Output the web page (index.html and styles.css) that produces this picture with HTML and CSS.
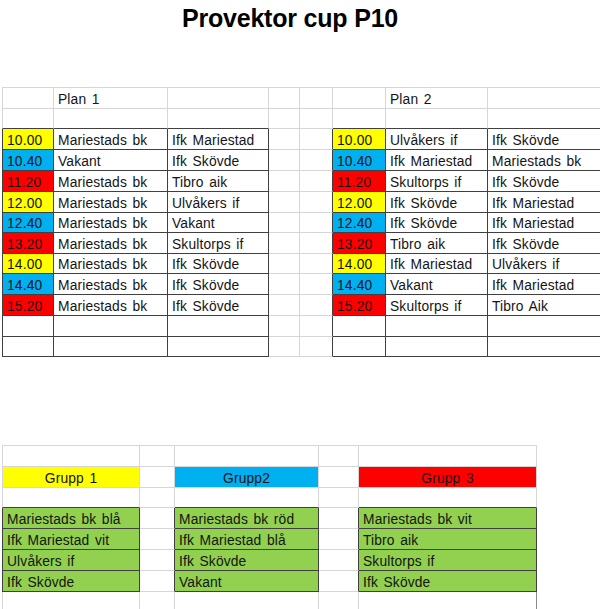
FILE: index.html
```html
<!DOCTYPE html>
<html>
<head>
<meta charset="utf-8">
<link rel="stylesheet" href="styles.css">
</head>
<body>
<h1 class="title">Provektor cup P10</h1>

<div class="sheet top-sheet">
  <!-- row 1 -->
  <div class="cell first top"></div><div class="cell top">Plan 1</div><div class="cell top"></div><div class="cell top"></div><div class="cell top"></div><div class="cell top"></div><div class="cell top">Plan 2</div><div class="cell top"></div>
  <!-- row 2 -->
  <div class="cell first dkb"></div><div class="cell dkb"></div><div class="cell dkb"></div><div class="cell"></div><div class="cell"></div><div class="cell dkb"></div><div class="cell dkb"></div><div class="cell dkb"></div>
  <!-- row 3 -->
  <div class="cell first dkl dk y">10.00</div><div class="cell dk">Mariestads bk</div><div class="cell dk">Ifk Mariestad</div><div class="cell"></div><div class="cell dkr"></div><div class="cell dk y">10.00</div><div class="cell dk">Ulvåkers if</div><div class="cell dk">Ifk Skövde</div>
  <!-- row 4 -->
  <div class="cell first dkl dk b">10.40</div><div class="cell dk">Vakant</div><div class="cell dk">Ifk Skövde</div><div class="cell"></div><div class="cell dkr"></div><div class="cell dk b">10.40</div><div class="cell dk">Ifk Mariestad</div><div class="cell dk">Mariestads bk</div>
  <!-- row 5 -->
  <div class="cell first dkl dk r">11.20</div><div class="cell dk">Mariestads bk</div><div class="cell dk">Tibro aik</div><div class="cell"></div><div class="cell dkr"></div><div class="cell dk r">11.20</div><div class="cell dk">Skultorps if</div><div class="cell dk">Ifk Skövde</div>
  <!-- row 6 -->
  <div class="cell first dkl dk y">12.00</div><div class="cell dk">Mariestads bk</div><div class="cell dk">Ulvåkers if</div><div class="cell"></div><div class="cell dkr"></div><div class="cell dk y">12.00</div><div class="cell dk">Ifk Skövde</div><div class="cell dk">Ifk Mariestad</div>
  <!-- row 7 -->
  <div class="cell first dkl dk b">12.40</div><div class="cell dk">Mariestads bk</div><div class="cell dk">Vakant</div><div class="cell"></div><div class="cell dkr"></div><div class="cell dk b">12.40</div><div class="cell dk">Ifk Skövde</div><div class="cell dk">Ifk Mariestad</div>
  <!-- row 8 -->
  <div class="cell first dkl dk r">13.20</div><div class="cell dk">Mariestads bk</div><div class="cell dk">Skultorps if</div><div class="cell"></div><div class="cell dkr"></div><div class="cell dk r">13.20</div><div class="cell dk">Tibro aik</div><div class="cell dk">Ifk Skövde</div>
  <!-- row 9 -->
  <div class="cell first dkl dk y">14.00</div><div class="cell dk">Mariestads bk</div><div class="cell dk">Ifk Skövde</div><div class="cell"></div><div class="cell dkr"></div><div class="cell dk y">14.00</div><div class="cell dk">Ifk Mariestad</div><div class="cell dk">Ulvåkers if</div>
  <!-- row 10 -->
  <div class="cell first dkl dk b">14.40</div><div class="cell dk">Mariestads bk</div><div class="cell dk">Ifk Skövde</div><div class="cell"></div><div class="cell dkr"></div><div class="cell dk b">14.40</div><div class="cell dk">Vakant</div><div class="cell dk">Ifk Mariestad</div>
  <!-- row 11 -->
  <div class="cell first dkl dk r">15.20</div><div class="cell dk">Mariestads bk</div><div class="cell dk">Ifk Skövde</div><div class="cell"></div><div class="cell dkr"></div><div class="cell dk r">15.20</div><div class="cell dk">Skultorps if</div><div class="cell dk">Tibro Aik</div>
  <!-- row 12 -->
  <div class="cell first dkl dk"></div><div class="cell dk"></div><div class="cell dk"></div><div class="cell"></div><div class="cell dkr"></div><div class="cell dk"></div><div class="cell dk"></div><div class="cell dk"></div>
  <!-- row 13 -->
  <div class="cell first dkl dk"></div><div class="cell dk"></div><div class="cell dk"></div><div class="cell"></div><div class="cell dkr"></div><div class="cell dk"></div><div class="cell dk"></div><div class="cell dk"></div>
</div>

<div class="sheet group-sheet">
  <!-- row 1 -->
  <div class="cell first top"></div><div class="cell top"></div><div class="cell top"></div><div class="cell top"></div><div class="cell top"></div>
  <!-- row 2 -->
  <div class="cell first y center">Grupp 1</div><div class="cell"></div><div class="cell b center">Grupp2</div><div class="cell"></div><div class="cell r center">Grupp 3</div>
  <!-- row 3 -->
  <div class="cell first dkb"></div><div class="cell"></div><div class="cell dkb"></div><div class="cell"></div><div class="cell dkb"></div>
  <!-- row 4 -->
  <div class="cell first dkl dk g">Mariestads bk blå</div><div class="cell dkr"></div><div class="cell dk g">Mariestads bk röd</div><div class="cell dkr"></div><div class="cell dk g">Mariestads bk vit</div>
  <!-- row 5 -->
  <div class="cell first dkl dk g">Ifk Mariestad vit</div><div class="cell dkr"></div><div class="cell dk g">Ifk Mariestad blå</div><div class="cell dkr"></div><div class="cell dk g">Tibro aik</div>
  <!-- row 6 -->
  <div class="cell first dkl dk g">Ulvåkers if</div><div class="cell dkr"></div><div class="cell dk g">Ifk Skövde</div><div class="cell dkr"></div><div class="cell dk g">Skultorps if</div>
  <!-- row 7 -->
  <div class="cell first dkl dk g">Ifk Skövde</div><div class="cell dkr"></div><div class="cell dk g">Vakant</div><div class="cell dkr"></div><div class="cell dk g">Ifk Skövde</div>
  <!-- row 8 -->
  <div class="cell first"></div><div class="cell"></div><div class="cell"></div><div class="cell"></div><div class="cell edge"></div>
  <!-- row 9 -->
  <div class="cell first"></div><div class="cell"></div><div class="cell"></div><div class="cell"></div><div class="cell edge"></div>
</div>
</body>
</html>
```

FILE: styles.css
```css
html, body {
  margin: 0;
  padding: 0;
  background: #ffffff;
  overflow: hidden;
}

body {
  width: 600px;
  height: 609px;
  font-family: "Liberation Sans", Arial, sans-serif;
  color: #141414;
}

.title {
  margin: 0;
  width: 580px;
  height: 87px;
  padding-top: 3px;
  box-sizing: border-box;
  text-align: center;
  font-size: 25px;
  font-weight: bold;
  line-height: 30px;
  color: #000;
  letter-spacing: -0.2px;
}

.sheet {
  display: grid;
  margin-left: 2px;
}

.top-sheet {
  grid-template-columns: 52px 114px 101px 31px 33px 53px 102px 120px;
  grid-template-rows: 22px 20px 21px 21px 21px 21px 20px 21px 20px 21px 21px 21px 20px;
  width: 626px;
}

.group-sheet {
  margin-top: 88px;
  grid-template-columns: 138px 35px 144px 40px 178px;
  grid-template-rows: 22px 21px 20px 21px 21px 21px 21px 21px 21px;
  width: 535px;
}

.cell {
  box-sizing: border-box;
  border-right: 1px solid #d6d6d6;
  border-bottom: 1px solid #d6d6d6;
  padding: 2px 0 0 4px;
  font-size: 13.8px;
  letter-spacing: 0.15px;
  word-spacing: 1.5px;
  white-space: nowrap;
  overflow: hidden;
  display: flex;
  align-items: center;
}

.first { border-left: 1px solid #d6d6d6; }
.top { border-top: 1px solid #d6d6d6; }

.dk {
  border-right-color: #404040;
  border-bottom-color: #404040;
}
.dkl { border-left-color: #404040; }
.dkb { border-bottom-color: #404040; }
.dkr { border-right-color: #404040; }
.edge { border-right-color: #8a8a8a; }

.y { background: #ffff00; }
.b { background: #00b0f0; }
.r { background: #ff0000; }
.g { background: #92d050; }

.center {
  justify-content: center;
  padding-left: 0;
}
```
